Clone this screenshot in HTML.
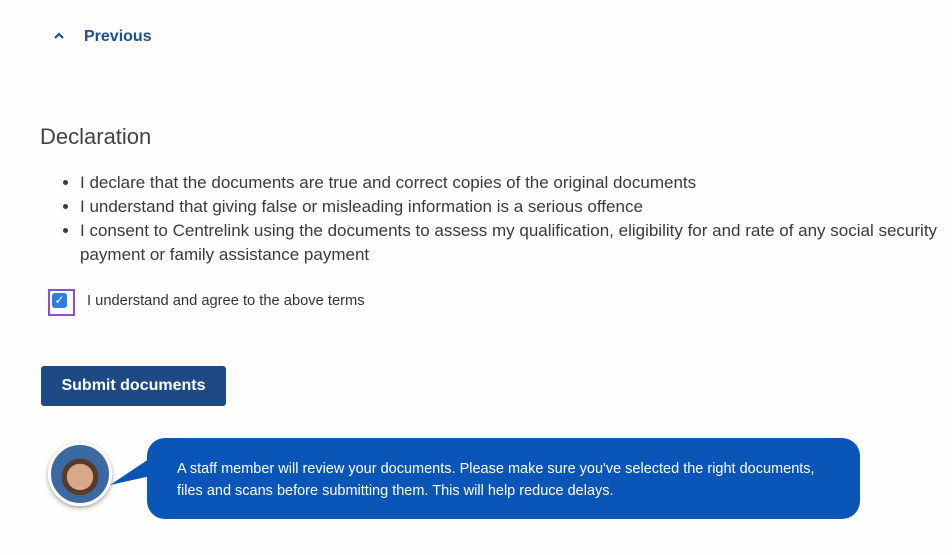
<!DOCTYPE html>
<html><head><style>
body{margin:0;width:952px;height:555px;background:#fdfdfb;font-family:"Liberation Sans",sans-serif;position:relative;overflow:hidden;color:#3a3a3a}
.a{position:absolute}
</style></head><body>
<div class="a" style="left:53px;top:28px;color:#1d4f91;font-size:16px;font-weight:bold">
<svg width="12" height="10" style="margin-right:19px" viewBox="0 0 12 10"><path d="M2 7 L6 3 L10 7" stroke="#1d4f91" stroke-width="2.2" fill="none"/></svg>Previous</div>
<div class="a" style="left:40px;top:124px;font-size:22px;color:#444">Declaration</div>
<ul class="a" style="left:40px;top:171px;margin:0;padding-left:40px;width:866px;font-size:17px;line-height:24px;color:#3a3a3a">
<li>I declare that the documents are true and correct copies of the original documents</li>
<li>I understand that giving false or misleading information is a serious offence</li>
<li>I consent to Centrelink using the documents to assess my qualification, eligibility for and rate of any social security payment or family assistance payment</li>
</ul>
<div class="a" style="left:48px;top:289px;width:23px;height:23px;border:2px solid #8a4fd6"></div>
<div class="a" style="left:52px;top:293px;width:15px;height:15px;background:#2f7de0;border-radius:3px;color:#fff;font-size:12px;line-height:15px;text-align:center">✓</div>
<div class="a" style="left:87px;top:293px;font-size:14.7px;color:#333">I understand and agree to the above terms</div>
<div class="a" style="left:41px;top:366px;width:185px;height:40px;background:#1d4a85;border-radius:3px;color:#fff;font-weight:bold;font-size:16px;line-height:40px;text-align:center">Submit documents</div>
<div class="a" style="left:48px;top:442px;width:58px;height:58px;border-radius:50%;border:3px solid #fff;box-shadow:0 2px 5px rgba(0,0,0,.35);background:radial-gradient(circle at 50% 55%,#d8a88a 0 30%,#5a3a2a 31% 42%,#3b6aa3 43%)"></div>
<svg class="a" style="left:110px;top:455px" width="45" height="35"><path d="M45 0 L0 30 L45 20Z" fill="#0a56b8"/></svg>
<div class="a" style="left:147px;top:438px;width:713px;height:81px;background:#0a56b8;border-radius:18px;color:#fff;font-size:14.5px;line-height:22px;box-sizing:border-box;padding:20px 0 0 30px">A staff member will review your documents. Please make sure you've selected the right documents,<br>files and scans before submitting them. This will help reduce delays.</div>
</body></html>
